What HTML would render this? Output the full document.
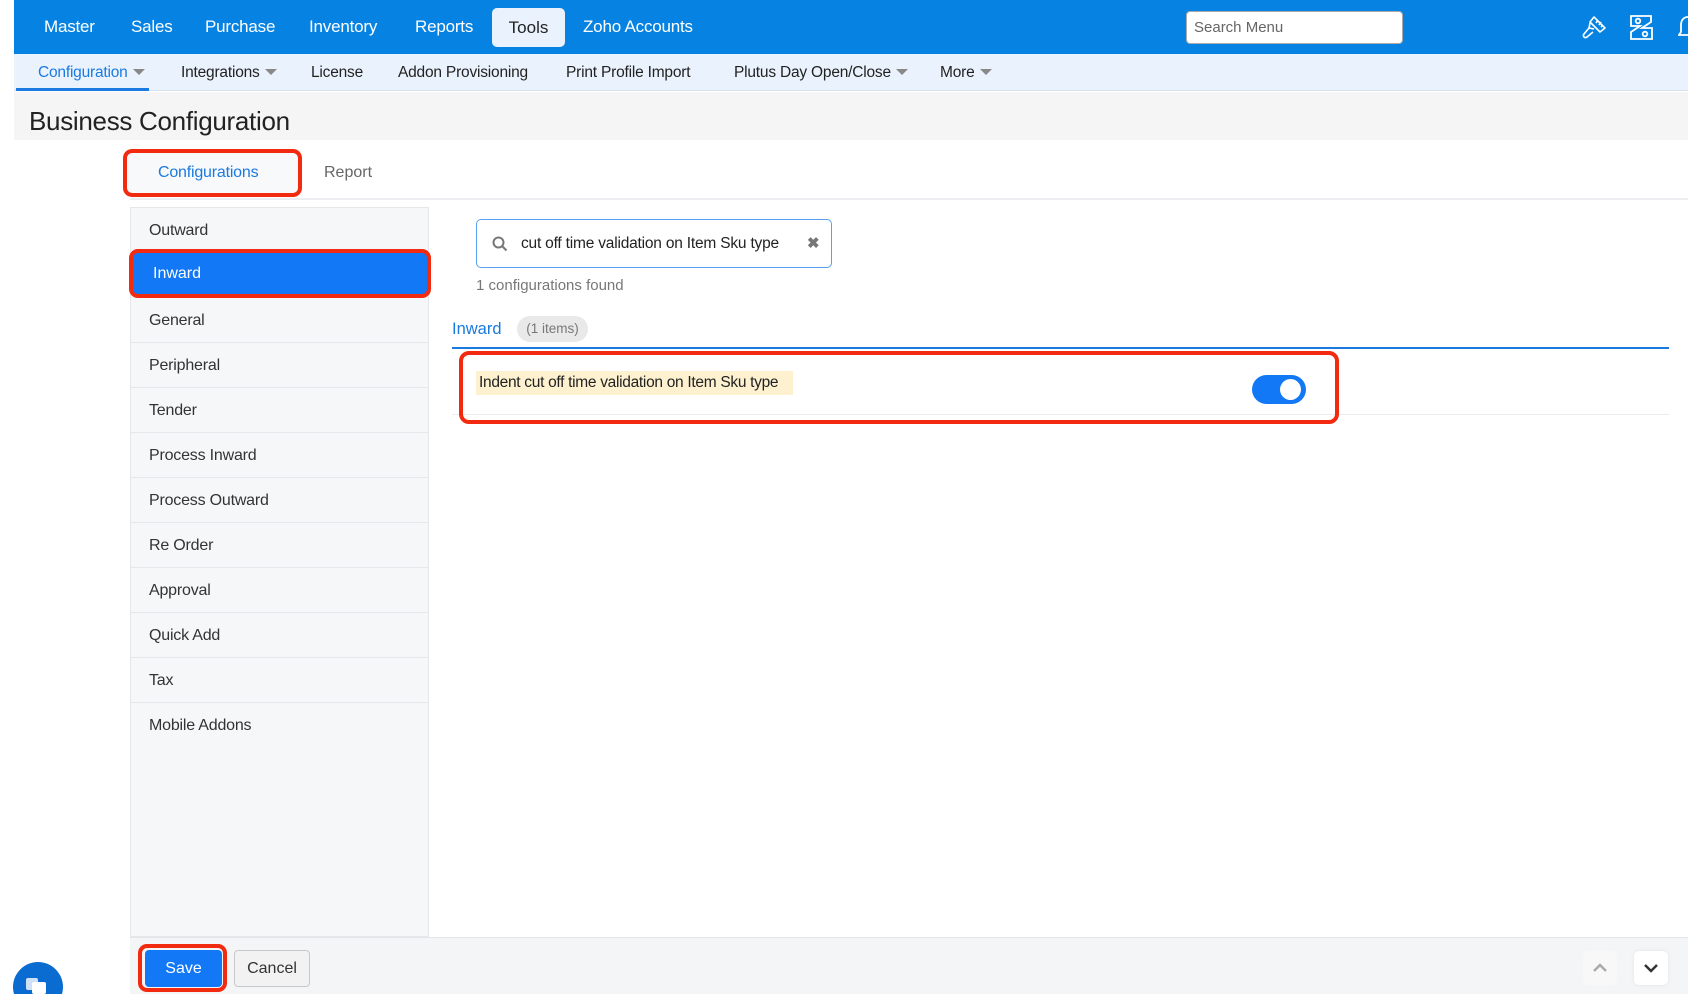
<!DOCTYPE html>
<html style="width:1688px;height:994px;overflow:hidden"><head><meta charset="utf-8"><style>
*{box-sizing:border-box;margin:0;padding:0}
body{width:1688px;height:994px;overflow:hidden;background:#fff;font-family:"Liberation Sans",sans-serif;position:relative;color:#333}
.a{position:absolute}
.top{left:14px;top:0;width:1674px;height:54px;background:#0683e2}
.mi{position:absolute;top:17px;color:#fff;font-size:17px;line-height:20px;letter-spacing:-0.2px}
.tools{left:492px;top:8px;width:73px;height:39px;background:#eaf3fd;border-radius:5px;color:#222;font-size:17px;text-align:center;line-height:39px}
.sub{left:14px;top:54px;width:1674px;height:37px;background:#eaf3fd;border-bottom:1px solid #d6e0ea}
.si{position:absolute;top:63px;font-size:15.5px;color:#222;line-height:20px;letter-spacing:-0.2px}
.car{display:inline-block;width:0;height:0;border-left:6px solid transparent;border-right:6px solid transparent;border-top:6px solid #888;margin-left:5px;vertical-align:2px}
.li{position:absolute;left:131px;width:297px;height:45px;border-bottom:1px solid #e6e7ea;font-size:16px;color:#333;padding-left:18px;line-height:45px;letter-spacing:-0.2px}
</style></head><body>
<div class="a top"></div>
<div class="mi" style="left:44px">Master</div>
<div class="mi" style="left:131px">Sales</div>
<div class="mi" style="left:205px">Purchase</div>
<div class="mi" style="left:309px">Inventory</div>
<div class="mi" style="left:415px">Reports</div>
<div class="a tools">Tools</div>
<div class="mi" style="left:583px">Zoho Accounts</div>
<div class="a" style="left:1186px;top:11px;width:217px;height:33px;background:#fff;border:1px solid #aaa;border-radius:4px;font-size:15px;color:#666;padding-left:7px;line-height:31px">Search Menu</div>
<svg class="a" style="left:1580px;top:12px" width="30" height="30" viewBox="0 0 30 30" fill="none" stroke="#fff" stroke-width="1.6" stroke-linejoin="round"><path d="M14 5l11 11-5 4-10-10z"/><path d="M18 8l-2 3M21 10l-2 3M23 13l-2 2"/><path d="M10 11l-1 5 5 1"/><path d="M9 16l-5 6a2 2 0 0 0 3 3l6-5"/></svg>
<svg class="a" style="left:1628px;top:13px" width="28" height="30" viewBox="0 0 28 30" fill="none" stroke="#fff" stroke-width="1.8"><path d="M3 3h20v6l-9 6h10v11H3v-7l9-6H3z"/><circle cx="10" cy="8" r="2.3"/><circle cx="17" cy="21" r="2.3"/></svg>
<svg class="a" style="left:1678px;top:13px" width="10" height="28"><path d="M10 4c-5 0-7 4-7 8v7l-2 3h9" fill="none" stroke="#fff" stroke-width="1.8"/></svg>
<div class="a sub"></div>
<div class="si" style="left:38px;color:#1a7ae0">Configuration<span class="car"></span></div>
<div class="a" style="left:16px;top:88px;width:133px;height:3px;background:#1a7ae0"></div>
<div class="si" style="left:181px">Integrations<span class="car"></span></div>
<div class="si" style="left:311px">License</div>
<div class="si" style="left:398px">Addon Provisioning</div>
<div class="si" style="left:566px">Print Profile Import</div>
<div class="si" style="left:734px">Plutus Day Open/Close<span class="car"></span></div>
<div class="si" style="left:940px">More<span class="car"></span></div>
<div class="a" style="left:14px;top:92px;width:1674px;height:48px;background:#f5f5f5"></div>
<div class="a" style="left:29px;top:104px;font-size:26px;color:#222;line-height:34px;letter-spacing:-0.3px">Business Configuration</div>
<div class="a" style="left:130px;top:198px;width:1558px;height:2px;background:#eceef1"></div>
<div class="a" style="left:123px;top:149px;width:179px;height:48px;border:4px solid #f22a0f;border-radius:9px;background:#f8f9fb"></div>
<div class="a" style="left:158px;top:164px;font-size:16px;color:#1a7ae0;letter-spacing:-0.2px">Configurations</div>
<div class="a" style="left:324px;top:164px;font-size:16px;color:#666">Report</div>
<div class="a" style="left:130px;top:207px;width:299px;height:730px;background:#f6f7f9;border:1px solid #e6e7ea"></div>
<div class="li" style="top:208px">Outward</div>
<div class="a" style="left:129px;top:249px;width:302px;height:49px;border:4px solid #f22a0f;border-radius:9px;background:#1278f5;color:#fff;font-size:16px;line-height:41px;padding-left:20px">Inward</div>
<div class="li" style="top:298px">General</div>
<div class="li" style="top:343px">Peripheral</div>
<div class="li" style="top:388px">Tender</div>
<div class="li" style="top:433px">Process Inward</div>
<div class="li" style="top:478px">Process Outward</div>
<div class="li" style="top:523px">Re Order</div>
<div class="li" style="top:568px">Approval</div>
<div class="li" style="top:613px">Quick Add</div>
<div class="li" style="top:658px">Tax</div>
<div class="li" style="top:703px;border:none">Mobile Addons</div>
<div class="a" style="left:476px;top:219px;width:356px;height:49px;border:1.5px solid #5aa0f0;border-radius:5px;background:#fff"></div>
<svg class="a" style="left:492px;top:236px" width="16" height="16" fill="none" stroke="#777" stroke-width="2"><circle cx="6.5" cy="6.5" r="5"/><path d="M10 10l4.5 4.5"/></svg>
<div class="a" style="left:521px;top:235px;font-size:15.5px;color:#222;letter-spacing:-0.2px">cut off time validation on Item Sku type</div>
<div class="a" style="left:807px;top:234px;font-size:15px;color:#777;font-weight:bold">✖</div>
<div class="a" style="left:476px;top:277px;font-size:15px;color:#777">1 configurations found</div>
<div class="a" style="left:452px;top:320px;font-size:16.5px;color:#1a7ae0">Inward</div>
<div class="a" style="left:517px;top:316px;width:71px;height:26px;background:#e9e9ea;border-radius:13px;font-size:13.5px;color:#777;text-align:center;line-height:26px">(1 items)</div>
<div class="a" style="left:452px;top:347px;width:1217px;height:2px;background:#1a7ae0"></div>
<div class="a" style="left:452px;top:414px;width:1217px;height:1px;background:#ececec"></div>
<div class="a" style="left:459px;top:351px;width:880px;height:73px;border:4px solid #f22a0f;border-radius:10px"></div>
<div class="a" style="left:476px;top:371px;width:317px;height:24px;background:#fdf1cf;font-size:15.5px;color:#222;line-height:24px;padding-left:3px;letter-spacing:-0.3px;white-space:nowrap">Indent cut off time validation on Item Sku type</div>
<div class="a" style="left:1252px;top:375px;width:54px;height:29px;background:#1278f5;border-radius:15px"><div class="a" style="left:28px;top:4px;width:21px;height:21px;border-radius:50%;background:#fff"></div></div>
<div class="a" style="left:130px;top:937px;width:1558px;height:57px;background:#f4f5f7;border-top:1px solid #e4e5e8"></div>
<div class="a" style="left:138px;top:944px;width:89px;height:48px;border:4px solid #f22a0f;border-radius:9px"></div>
<div class="a" style="left:145px;top:950px;width:77px;height:37px;background:#1278f5;border-radius:4px;color:#fff;font-size:16px;text-align:center;line-height:37px">Save</div>
<div class="a" style="left:234px;top:950px;width:76px;height:37px;background:#f2f2f2;border:1px solid #c8c8c8;border-radius:4px;color:#333;font-size:16px;text-align:center;line-height:35px">Cancel</div>
<div class="a" style="left:1583px;top:951px;width:34px;height:34px;background:#f8f8f9;border-radius:5px"><svg width="34" height="34"><path d="M11 20l6-6 6 6" fill="none" stroke="#aaa" stroke-width="2.5"/></svg></div>
<div class="a" style="left:1634px;top:951px;width:34px;height:34px;background:#fff;border-radius:5px;box-shadow:0 0 4px #e4e4e4"><svg width="34" height="34"><path d="M11 14l6 6 6-6" fill="none" stroke="#333" stroke-width="2.5"/></svg></div>
<div class="a" style="left:13px;top:962px;width:50px;height:50px;border-radius:50%;background:#0a6cd0"><svg class="a" style="left:11px;top:14px" width="28" height="20"><rect x="2" y="2" width="12" height="12" rx="2" fill="#fff" opacity=".8"/><rect x="8" y="6" width="14" height="12" rx="2" fill="#fff"/></svg></div>
</body></html>
